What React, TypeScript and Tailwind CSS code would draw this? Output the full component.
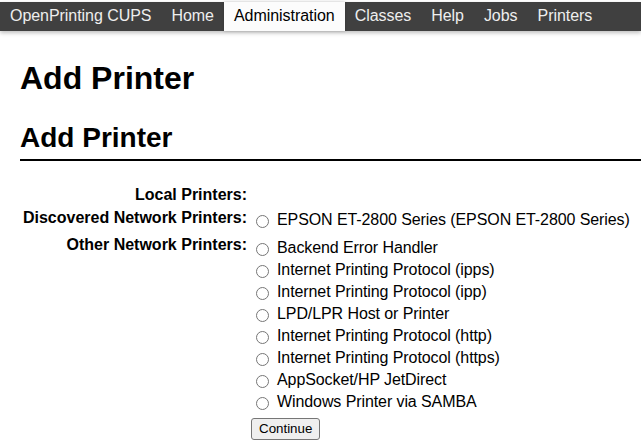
import React from "react";

const navItems = [
  { label: "OpenPrinting CUPS", active: false },
  { label: "Home", active: false },
  { label: "Administration", active: true },
  { label: "Classes", active: false },
  { label: "Help", active: false },
  { label: "Jobs", active: false },
  { label: "Printers", active: false },
];

const others = [
  "Backend Error Handler",
  "Internet Printing Protocol (ipps)",
  "Internet Printing Protocol (ipp)",
  "LPD/LPR Host or Printer",
  "Internet Printing Protocol (http)",
  "Internet Printing Protocol (https)",
  "AppSocket/HP JetDirect",
  "Windows Printer via SAMBA",
];

function Radio({ label }: { label: string }) {
  return (
    <div className="flex items-start h-[22px] leading-[22px] whitespace-nowrap">
      <span className="mt-[6px] ml-[5px] mr-[8px] inline-block w-[13px] h-[13px] rounded-full border border-[#767676] bg-white shrink-0" />
      <span className="tracking-[-0.09px]">{label}</span>
    </div>
  );
}

export default function App() {
  return (
    <div
      className="w-[641px] h-[446px] overflow-hidden bg-white text-black"
      style={{ fontFamily: '"Liberation Sans", Arial, sans-serif' }}
    >
      <div className="mt-[2px] h-[29px] bg-[#404040] flex shadow-[0_2px_4px_rgba(0,0,0,0.25)] relative z-10">
        {navItems.map((item) => (
          <div
            key={item.label}
            className={
              item.active
                ? "h-full px-[10px] text-[16px] leading-[27px] tracking-[-0.05px] bg-[#fcfcfc] text-black whitespace-nowrap shadow-[0_0_3px_rgba(0,0,0,0.2)]"
                : "h-full px-[10px] text-[16px] leading-[27px] tracking-[-0.05px] text-[#eeeeee] whitespace-nowrap"
            }
          >
            {item.label}
          </div>
        ))}
      </div>

      <div className="pl-[20px]">
        <h1 className="mt-[31px] text-[32px] leading-[32px] font-bold">Add Printer</h1>
        <h2 className="mt-[30px] text-[28px] leading-[28px] font-bold pb-[7px] border-b-2 border-black">
          Add Printer
        </h2>

        <div className="mt-[23px] text-[16px] leading-[22px]">
          <div className="flex">
            <div className="w-[229px] pr-[2px] text-right font-bold h-[22px]">Local Printers:</div>
            <div className="pl-[2px]" />
          </div>
          <div className="flex">
            <div className="w-[229px] pr-[2px] text-right font-bold mt-[1px] whitespace-nowrap">
              Discovered Network Printers:
            </div>
            <div className="pl-[2px] mt-[3px]">
              <Radio label="EPSON ET-2800 Series (EPSON ET-2800 Series)" />
            </div>
          </div>
          <div className="flex">
            <div className="w-[229px] pr-[2px] text-right font-bold mt-[3px] whitespace-nowrap">
              Other Network Printers:
            </div>
            <div className="pl-[2px] mt-[6px]">
              {others.map((o) => (
                <Radio key={o} label={o} />
              ))}
              <button className="mt-[5px] h-[22px] px-[7px] text-[13.33px] leading-[16px] bg-[#efefef] border border-[#767676] rounded-[3px] text-black">
                Continue
              </button>
            </div>
          </div>
        </div>
      </div>
    </div>
  );
}
